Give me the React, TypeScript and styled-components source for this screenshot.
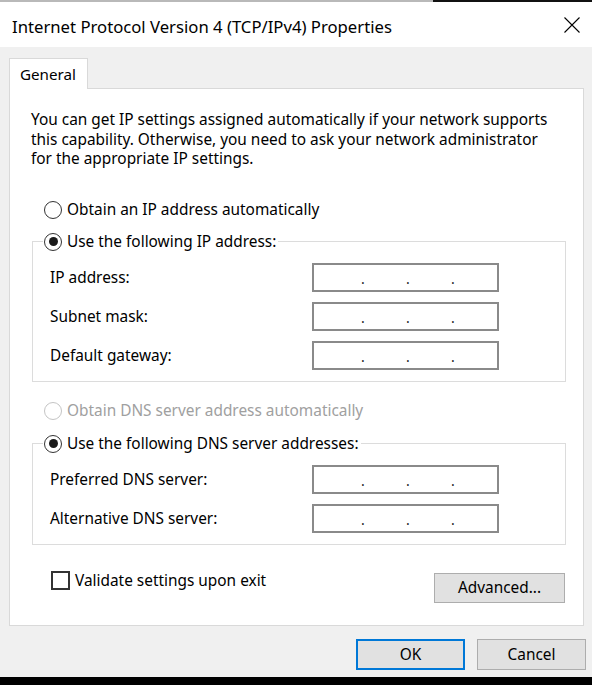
import styled, { createGlobalStyle } from "styled-components";

const GlobalStyle = createGlobalStyle`
  html, body {
    margin: 0;
    padding: 0;
  }
  body {
    font-family: "Noto Sans", "Liberation Sans", sans-serif;
    color: #000;
    background: #000;
  }
  * {
    box-sizing: border-box;
  }
`;

const Window = styled.div`
  width: 592px;
  height: 685px;
  display: flex;
  flex-direction: column;
  background: #000;
  overflow: hidden;
`;

const TopEdge = styled.div`
  height: 2px;
  background: linear-gradient(to right, #b9b9b9 0, #b9b9b9 433px, #111 433px);
`;

const TitleBar = styled.div`
  height: 45px;
  background: #fff;
  display: flex;
  align-items: center;
  justify-content: space-between;
  padding: 0 12px;
`;

const Title = styled.span`
  font-size: 16.7px;
  padding-top: 3px;
`;

const CloseButton = styled.button`
  border: 0;
  background: transparent;
  padding: 0;
  width: 16px;
  height: 16px;
  display: flex;
`;

const Body = styled.div`
  background: #f0f0f0;
  padding: 11px 6px 7px 9px;
  display: flex;
  flex-direction: column;
`;

const TabStrip = styled.div`
  display: flex;
`;

const Tab = styled.div`
  width: 79px;
  height: 31px;
  border: 1px solid #d9d9d9;
  border-bottom: 0;
  background: #fff;
  margin-bottom: -1px;
  position: relative;
  z-index: 1;
  display: flex;
  align-items: center;
  padding-left: 10px;
  font-size: 15.2px;
`;

const Panel = styled.div`
  background: #fff;
  border: 1px solid #d9d9d9;
  margin-right: 2px;
  padding: 21px 17px 22px 22px;
  display: flex;
  flex-direction: column;
`;

const Intro = styled.p`
  margin: 0 0 0 -1px;
  font-size: 15.4px;
  line-height: 19.5px;
  white-space: nowrap;
`;

const RadioRow = styled.label<{ $disabled?: boolean; $indent?: number; $top?: number }>`
  display: flex;
  align-items: center;
  gap: 5px;
  height: 22px;
  font-size: 15.4px;
  white-space: nowrap;
  margin-left: ${(p) => p.$indent ?? 0}px;
  margin-top: ${(p) => p.$top ?? 0}px;
  color: ${(p) => (p.$disabled ? "#a0a0a0" : "#000")};
`;

const RadioCircle = styled.span<{ $checked?: boolean; $disabled?: boolean }>`
  width: 18px;
  height: 18px;
  flex-shrink: 0;
  border-radius: 50%;
  border: 1.5px solid ${(p) => (p.$disabled ? "#c4c4c4" : "#333")};
  background: #fff;
  display: flex;
  align-items: center;
  justify-content: center;

  &::after {
    content: "";
    width: 9px;
    height: 9px;
    border-radius: 50%;
    background: #1a1a1a;
    display: ${(p) => (p.$checked ? "block" : "none")};
  }
`;

const GroupBox = styled.fieldset<{ $top: number }>`
  margin: ${(p) => p.$top}px 0 0 0;
  padding: 0 0 11px 10px;
  border: 1px solid #dcdcdc;
  min-width: 0;
`;

const GroupLegend = styled.legend`
  padding: 0 2px 0 1px;
`;

const FieldRows = styled.div`
  display: flex;
  flex-direction: column;
  gap: 10px;
  margin-top: 10px;
  padding-left: 7px;
`;

const FieldRow = styled.div`
  display: grid;
  grid-template-columns: 262px 187px;
  align-items: center;
  font-size: 15.4px;
`;

const IpBox = styled.div`
  width: 187px;
  height: 29px;
  border: 2px solid #8a8a8a;
  background: #fff;
  display: flex;
  align-items: center;
  gap: 39px;
  padding-left: 46px;
  font-size: 14px;
  line-height: 29px;
  color: #222;
`;

const IpDot = styled.span`
  width: 6px;
  text-align: center;
  padding-top: 3px;
`;

const BottomRow = styled.div`
  display: flex;
  justify-content: space-between;
  align-items: flex-start;
  margin-top: 26px;
  padding-right: 1px;
`;

const CheckLabel = styled.label`
  display: flex;
  align-items: center;
  gap: 5px;
  margin-left: 19px;
  font-size: 15.4px;
  line-height: 19px;
`;

const CheckBox = styled.span`
  width: 19px;
  height: 19px;
  flex-shrink: 0;
  border: 2px solid #333;
  background: #fff;
`;

const Button = styled.button<{ $default?: boolean; $width: number; $height: number }>`
  width: ${(p) => p.$width}px;
  height: ${(p) => p.$height}px;
  background: #e1e1e1;
  border: ${(p) => (p.$default ? "2px solid #0078d7" : "1.5px solid #adadad")};
  font-family: "Noto Sans", "Liberation Sans", sans-serif;
  font-size: 15.4px;
  color: #000;
  padding: 0;
`;

const AdvancedButton = styled(Button)`
  margin-top: 2px;
`;

const Footer = styled.div`
  display: flex;
  justify-content: flex-end;
  gap: 12px;
  margin-top: 13px;
`;

const CloseIcon = () => (
  <svg width="16" height="16" viewBox="0 0 16 16">
    <path d="M0.5 0.5 L15.5 15.5 M15.5 0.5 L0.5 15.5" stroke="#000" strokeWidth="1.1" fill="none" />
  </svg>
);

const IpField = () => (
  <IpBox>
    <IpDot>.</IpDot>
    <IpDot>.</IpDot>
    <IpDot>.</IpDot>
  </IpBox>
);

const ipFields = ["IP address:", "Subnet mask:", "Default gateway:"];
const dnsFields = ["Preferred DNS server:", "Alternative DNS server:"];

const App = () => {
  return (
    <Window>
      <GlobalStyle />
      <TopEdge />
      <TitleBar>
        <Title>Internet Protocol Version 4 (TCP/IPv4) Properties</Title>
        <CloseButton aria-label="Close">
          <CloseIcon />
        </CloseButton>
      </TitleBar>
      <Body>
        <TabStrip>
          <Tab>General</Tab>
        </TabStrip>
        <Panel>
          <Intro>
            You can get IP settings assigned automatically if your network supports
            <br />
            this capability. Otherwise, you need to ask your network administrator
            <br />
            for the appropriate IP settings.
          </Intro>

          <RadioRow $indent={12} $top={30}>
            <RadioCircle />
            Obtain an IP address automatically
          </RadioRow>

          <GroupBox $top={10}>
            <GroupLegend>
              <RadioRow>
                <RadioCircle $checked />
                Use the following IP address:
              </RadioRow>
            </GroupLegend>
            <FieldRows>
              {ipFields.map((label) => (
                <FieldRow key={label}>
                  <span>{label}</span>
                  <IpField />
                </FieldRow>
              ))}
            </FieldRows>
          </GroupBox>

          <RadioRow $indent={12} $top={18} $disabled>
            <RadioCircle $disabled />
            Obtain DNS server address automatically
          </RadioRow>

          <GroupBox $top={11}>
            <GroupLegend>
              <RadioRow>
                <RadioCircle $checked />
                Use the following DNS server addresses:
              </RadioRow>
            </GroupLegend>
            <FieldRows>
              {dnsFields.map((label) => (
                <FieldRow key={label}>
                  <span>{label}</span>
                  <IpField />
                </FieldRow>
              ))}
            </FieldRows>
          </GroupBox>

          <BottomRow>
            <CheckLabel>
              <CheckBox />
              Validate settings upon exit
            </CheckLabel>
            <AdvancedButton $width={131} $height={30}>
              Advanced...
            </AdvancedButton>
          </BottomRow>
        </Panel>
        <Footer>
          <Button $default $width={109} $height={31}>
            OK
          </Button>
          <Button $width={109} $height={31}>
            Cancel
          </Button>
        </Footer>
      </Body>
    </Window>
  );
};

export default App;
